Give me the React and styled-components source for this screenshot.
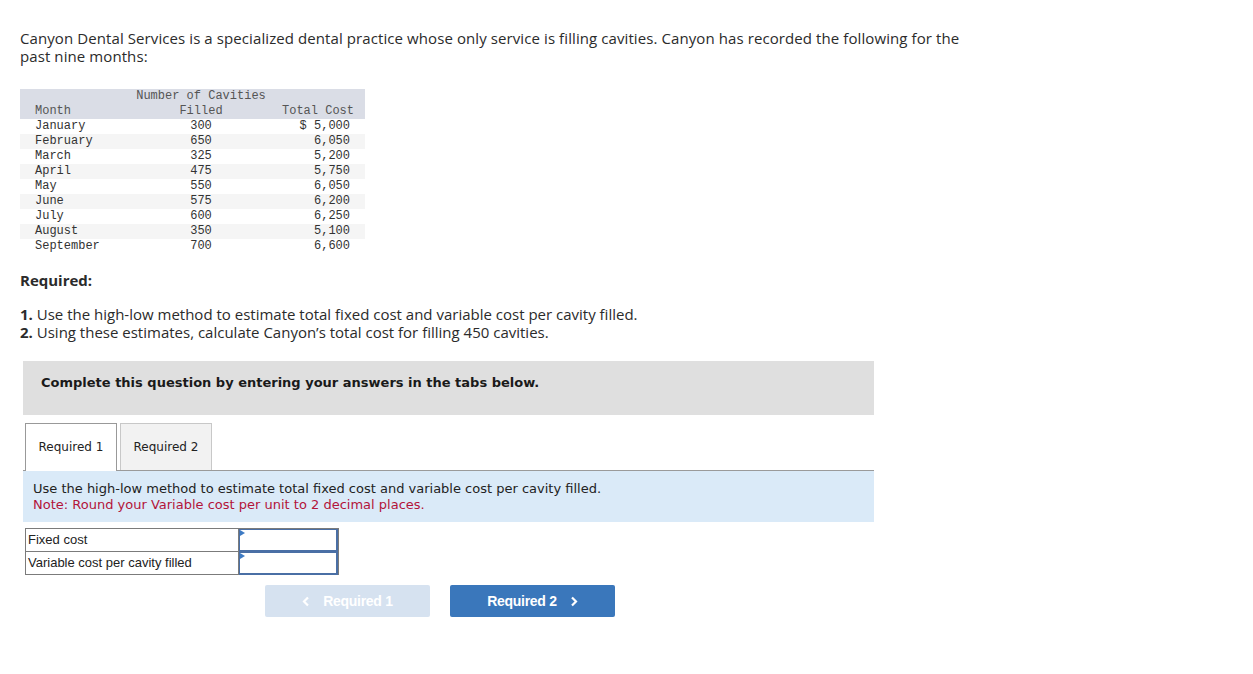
import React from "react";
import styled, { createGlobalStyle } from "styled-components";

const GlobalStyle = createGlobalStyle`
  body {
    margin: 0;
    background: #fff;
  }
`;

const Page = styled.div`
  padding: 29px 20px 40px 20px;
  width: 960px;
`;

const Intro = styled.p`
  margin: 0;
  font-family: "Open Sans", sans-serif;
  font-size: 15px;
  line-height: 18px;
  letter-spacing: 0.09px;
  color: #2b2b2b;
`;

const DataTable = styled.div`
  margin-top: 24px;
  width: 345px;
  font-family: "Liberation Mono", monospace;
  font-size: 12px;
  line-height: 15px;
  color: #333;
  white-space: nowrap;
`;

const DataRow = styled.div`
  display: grid;
  grid-template-columns: 116px 130px 99px;
  background: ${({ $head, $stripe }) =>
    $head ? "#dadde6" : $stripe ? "#f5f5f5" : "#fff"};
  color: ${({ $head }) => ($head ? "#555" : "#333")};
`;

const MonthCell = styled.div`
  padding-left: 15px;
  align-self: end;
`;

const CountCell = styled.div`
  text-align: center;
`;

const CostCell = styled.div`
  text-align: right;
  padding-right: ${({ $head }) => ($head ? "11px" : "15px")};
  align-self: end;
`;

const Required = styled.div`
  margin-top: 17px;
  font-family: "Open Sans", sans-serif;
  font-size: 15px;
  font-weight: 700;
  color: #2b2b2b;
  line-height: 18px;
`;

const Steps = styled.div`
  margin-top: 16px;
  font-family: "Open Sans", sans-serif;
  font-size: 15px;
  line-height: 18px;
  color: #2b2b2b;
  b {
    font-weight: 700;
  }
`;

const Prompt = styled.div`
  margin: 20px 0 0 3px;
  width: 851px;
  height: 54px;
  box-sizing: border-box;
  padding: 14px 0 0 18px;
  line-height: 16px;
  background: #dfdfdf;
  font-family: "DejaVu Sans", Verdana, sans-serif;
  font-weight: 700;
  font-size: 13px;
  color: #1a1a1a;
`;

const TabBar = styled.div`
  margin: 8px 0 0 3px;
  width: 851px;
  display: flex;
  gap: 3px;
  padding-left: 2px;
  box-sizing: border-box;
  border-bottom: 1px solid #9a9a9a;
`;

const Tab = styled.div`
  width: 92px;
  box-sizing: border-box;
  display: flex;
  align-items: center;
  justify-content: center;
  font-family: "DejaVu Sans", Verdana, sans-serif;
  font-size: 12px;
  color: #222;
  background: ${({ $active }) => ($active ? "#fff" : "#f2f2f2")};
  border: 1px solid ${({ $active }) => ($active ? "#999" : "#c8c8c8")};
  border-bottom: none;
  margin-bottom: ${({ $active }) => ($active ? "-1px" : "0")};
  height: ${({ $active }) => ($active ? "48px" : "47px")};
  padding-bottom: ${({ $active }) => ($active ? "1px" : "0")};
`;

const Instructions = styled.div`
  margin-left: 3px;
  width: 851px;
  box-sizing: border-box;
  padding: 10px 10px 9px 10px;
  background: #daeaf8;
  font-family: "DejaVu Sans", Verdana, sans-serif;
  font-size: 13px;
  line-height: 16px;
  color: #222;
`;

const Note = styled.div`
  color: #b3143a;
`;

const AnswerTable = styled.div`
  margin: 6px 0 0 5px;
  width: 312px;
  display: grid;
  grid-template-columns: 213px 99px;
  border: 1px solid #7b7b7b;
  border-bottom: none;
  font-family: "Liberation Sans", Arial, sans-serif;
  font-size: 13px;
  color: #222;
`;

const LabelCell = styled.div`
  height: 23px;
  box-sizing: border-box;
  padding: 3px 2px 0 2px;
  border-bottom: 1px solid #7b7b7b;
  border-right: 1px solid #7b7b7b;
`;

const InputCell = styled.div`
  position: relative;
  box-sizing: border-box;
  border: 2px solid #4a6fa5;
  border-left-width: 1px;
  border-top-width: ${({ $first }) => ($first ? "1px" : "2px")};
  margin-top: ${({ $first }) => ($first ? "0" : "-1px")};
  height: ${({ $first }) => ($first ? "23px" : "24px")};
  &::before {
    content: "";
    position: absolute;
    left: 0;
    top: 0;
    border-left: 5px solid #3e7bc4;
    border-top: 3px solid transparent;
    border-bottom: 3px solid transparent;
  }
`;

const NavRow = styled.div`
  margin: 10px 0 0 245px;
  display: flex;
  gap: 20px;
`;

const NavButton = styled.button`
  width: 165px;
  height: 32px;
  border: none;
  border-radius: 2px;
  display: flex;
  align-items: center;
  justify-content: center;
  gap: 13px;
  font-family: "Liberation Sans", Arial, sans-serif;
  font-weight: 700;
  font-size: 14px;
  letter-spacing: -0.3px;
  color: #fff;
  background: ${({ $disabled }) => ($disabled ? "#d6e2f0" : "#3a77bb")};
  cursor: ${({ $disabled }) => ($disabled ? "default" : "pointer")};
  padding: 0;
`;

const Chevron = ({ dir }) => (
  <svg width="8" height="11" viewBox="0 0 8 11">
    <path
      d={dir === "left" ? "M6 1.5 L2 5.5 L6 9.5" : "M2 1.5 L6 5.5 L2 9.5"}
      fill="none"
      stroke="#fff"
      strokeWidth="2.2"
    />
  </svg>
);

const rows = [
  ["January", "300", "$ 5,000"],
  ["February", "650", "6,050"],
  ["March", "325", "5,200"],
  ["April", "475", "5,750"],
  ["May", "550", "6,050"],
  ["June", "575", "6,200"],
  ["July", "600", "6,250"],
  ["August", "350", "5,100"],
  ["September", "700", "6,600"],
];

export default function App() {
  return (
    <>
      <GlobalStyle />
      <Page>
        <Intro>
          Canyon Dental Services is a specialized dental practice whose only
          service is filling cavities. Canyon has recorded the following for the
          <br />
          past nine months:
        </Intro>

        <DataTable>
          <DataRow $head>
            <MonthCell>Month</MonthCell>
            <CountCell>
              Number of Cavities
              <br />
              Filled
            </CountCell>
            <CostCell $head>Total Cost</CostCell>
          </DataRow>
          {rows.map(([month, count, cost], i) => (
            <DataRow key={month} $stripe={i % 2 === 1}>
              <MonthCell>{month}</MonthCell>
              <CountCell>{count}</CountCell>
              <CostCell>{cost}</CostCell>
            </DataRow>
          ))}
        </DataTable>

        <Required>Required:</Required>
        <Steps>
          <div>
            <b>1.</b> Use the high-low method to estimate total fixed cost and
            variable cost per cavity filled.
          </div>
          <div>
            <b>2.</b> Using these estimates, calculate Canyon’s total cost for
            filling 450 cavities.
          </div>
        </Steps>

        <Prompt>
          Complete this question by entering your answers in the tabs below.
        </Prompt>

        <TabBar>
          <Tab $active>Required 1</Tab>
          <Tab>Required 2</Tab>
        </TabBar>
        <Instructions>
          Use the high-low method to estimate total fixed cost and variable cost
          per cavity filled.
          <Note>Note: Round your Variable cost per unit to 2 decimal places.</Note>
        </Instructions>

        <AnswerTable>
          <LabelCell>Fixed cost</LabelCell>
          <InputCell $first />
          <LabelCell>Variable cost per cavity filled</LabelCell>
          <InputCell />
        </AnswerTable>

        <NavRow>
          <NavButton $disabled>
            <Chevron dir="left" />
            Required 1
          </NavButton>
          <NavButton>
            Required 2
            <Chevron dir="right" />
          </NavButton>
        </NavRow>
      </Page>
    </>
  );
}
